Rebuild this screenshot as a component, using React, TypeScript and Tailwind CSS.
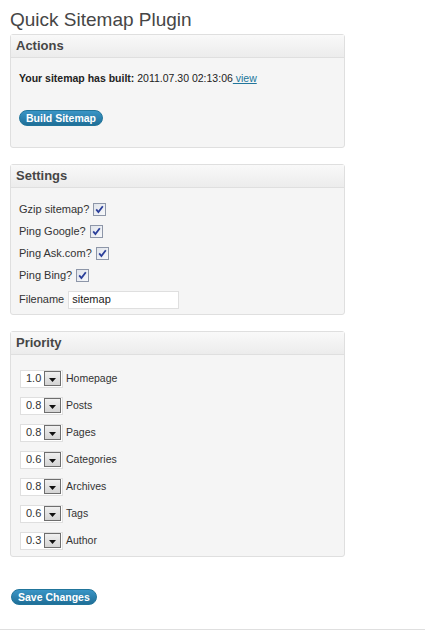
import React from "react";

function Box({ title, children, className = "" }: { title: string; children: React.ReactNode; className?: string }) {
  return (
    <div className={`w-[335px] rounded-[3px] border border-[#dfdfdf] bg-[#f5f5f5] ${className}`}>
      <div className="flex h-[23px] items-center border-b border-[#dfdfdf] bg-gradient-to-b from-[#f9f9f9] to-[#ececec] px-[5px] text-[13px] font-bold text-[#464646]">
        {title}
      </div>
      {children}
    </div>
  );
}

function Check() {
  return (
    <svg width="13" height="13" viewBox="0 0 13 13" className="shrink-0">
      <defs>
        <linearGradient id="cb" x1="0" y1="0" x2="1" y2="1">
          <stop offset="0" stopColor="#dfe3ea" />
          <stop offset="1" stopColor="#f8f9fb" />
        </linearGradient>
      </defs>
      <rect x="0.5" y="0.5" width="12" height="12" fill="url(#cb)" stroke="#8d96a8" />
      <path d="M3.2 6.4 L5.4 9 L9.8 3.2" fill="none" stroke="#2b3f9a" strokeWidth="1.8" />
    </svg>
  );
}

function Select({ value, label }: { value: string; label: string }) {
  return (
    <div className="flex items-center gap-[3px]">
      <div className="flex h-[18px] w-[43px] items-center justify-between border border-[#dfdfdf] bg-white pl-[5px] pr-[1px]">
        <span>{value}</span>
        <div className="flex h-[15px] w-[17px] items-end justify-center border border-[#6e6e6e] bg-gradient-to-b from-[#f0f0f0] to-[#d4d4d4] pb-[3px]">
          <svg width="7" height="4" viewBox="0 0 7 4">
            <path d="M0 0 H7 L3.5 4 Z" fill="#111" />
          </svg>
        </div>
      </div>
      <span className="text-[10.5px]">{label}</span>
    </div>
  );
}

function PillButton({ children }: { children: React.ReactNode }) {
  return (
    <button className="h-[16px] rounded-full border border-[#21759b] bg-gradient-to-b from-[#3a95c6] to-[#1f6f98] px-[6px] text-[10.5px] leading-none font-bold text-white">
      {children}
    </button>
  );
}

export default function App() {
  const priorities = [
    ["1.0", "Homepage"],
    ["0.8", "Posts"],
    ["0.8", "Pages"],
    ["0.6", "Categories"],
    ["0.8", "Archives"],
    ["0.6", "Tags"],
    ["0.3", "Author"],
  ];

  return (
    <div className="min-h-[637px] bg-white font-['Liberation_Sans',Arial,sans-serif] text-[11px] text-[#333]">
      <div className="px-[10px] pt-[9px]">
        <h2 className="text-[19px] leading-[22px] text-[#464646]">Quick Sitemap Plugin</h2>

        <Box title="Actions" className="mt-[3px]">
          <div className="px-[8px] pt-[14px] pb-[20px]">
            <p className="text-[10.5px] leading-[13px] text-[#222]">
              <b>Your sitemap has built:</b> 2011.07.30 02:13:06
              <a className="text-[#21759b] underline"> view</a>
            </p>
            <div className="mt-[25px]">
              <PillButton>Build Sitemap</PillButton>
            </div>
          </div>
        </Box>

        <Box title="Settings" className="mt-[16px]">
          <div className="flex flex-col gap-[9px] px-[8px] pt-[15px] pb-[5px]">
            {["Gzip sitemap?", "Ping Google?", "Ping Ask.com?", "Ping Bing?"].map((l) => (
              <div key={l} className="flex h-[13px] items-center gap-[4px]">
                <span>{l}</span>
                <Check />
              </div>
            ))}
            <div className="flex items-center gap-[4px]">
              <span>Filename</span>
              <div className="flex h-[18px] w-[111px] items-center border border-[#dfdfdf] bg-white px-[3px] text-[#222]">sitemap</div>
            </div>
          </div>
        </Box>

        <Box title="Priority" className="mt-[16px]">
          <div className="flex flex-col gap-[9px] px-[9px] pt-[15px] pb-[6px]">
            {priorities.map(([v, l]) => (
              <Select key={l} value={v} label={l} />
            ))}
          </div>
        </Box>

        <div className="mt-[32px] pl-[1px]">
          <PillButton>Save Changes</PillButton>
        </div>
      </div>
      <div className="mt-[24px] border-t border-[#dfdfdf]" />
    </div>
  );
}
